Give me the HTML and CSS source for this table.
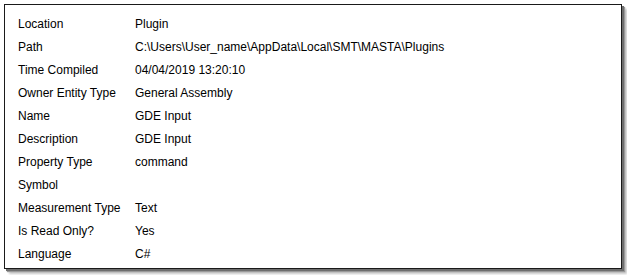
FILE: index.html
```html
<!DOCTYPE html>
<html>
<head>
<meta charset="utf-8">
<link rel="stylesheet" href="styles.css">
</head>
<body>
<div class="panel">
  <div class="row"><span class="label">Location</span><span class="value">Plugin</span></div>
  <div class="row"><span class="label">Path</span><span class="value">C:\Users\User_name\AppData\Local\SMT\MASTA\Plugins</span></div>
  <div class="row"><span class="label">Time Compiled</span><span class="value">04/04/2019 13:20:10</span></div>
  <div class="row"><span class="label">Owner Entity Type</span><span class="value">General Assembly</span></div>
  <div class="row"><span class="label">Name</span><span class="value">GDE Input</span></div>
  <div class="row"><span class="label">Description</span><span class="value">GDE Input</span></div>
  <div class="row"><span class="label">Property Type</span><span class="value">command</span></div>
  <div class="row"><span class="label">Symbol</span><span class="value"></span></div>
  <div class="row"><span class="label">Measurement Type</span><span class="value">Text</span></div>
  <div class="row"><span class="label">Is Read Only?</span><span class="value">Yes</span></div>
  <div class="row"><span class="label">Language</span><span class="value">C#</span></div>
</div>
</body>
</html>
```
FILE: styles.css
```css
html, body {
  margin: 0;
  padding: 0;
  background: #ffffff;
}
body {
  width: 627px;
  height: 275px;
  padding: 4px 0 0 4px;
  box-sizing: border-box;
  font-family: "Liberation Sans", Arial, sans-serif;
  font-size: 12px;
  color: #000;
}
.panel {
  width: 618px;
  height: 265px;
  box-sizing: border-box;
  border: 1px solid #1a1a1a;
  background: #fff;
  box-shadow: 2px 2px 0 #6e6e6e, 3px 3px 1px #9a9a9a, 5px 5px 2px #c8c8c8;
  padding: 7px 0 0 13px;
  display: flex;
  flex-direction: column;
}
.row {
  display: flex;
  height: 23px;
  align-items: center;
}
.label {
  width: 117px;
  flex: none;
}
.value {
  white-space: nowrap;
}
```
